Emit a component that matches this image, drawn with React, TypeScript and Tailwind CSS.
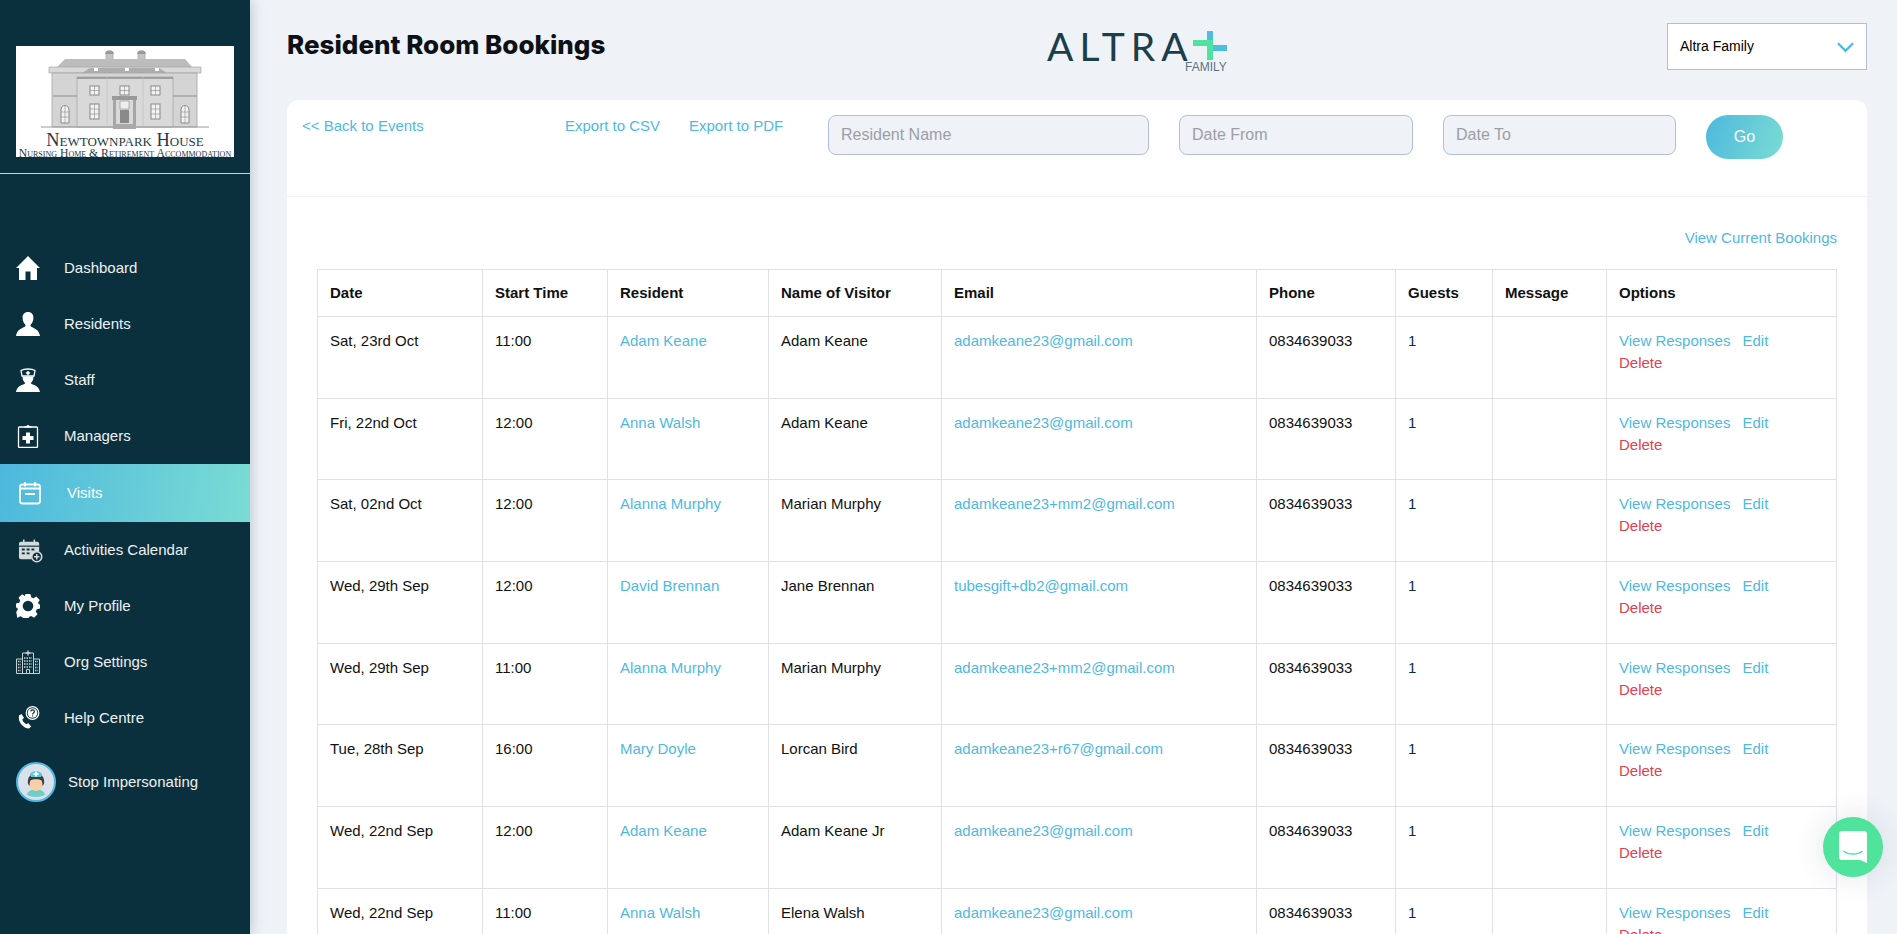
import type { ReactNode } from "react";

const cls = { link: "text-[#4fb9df]" };

function HomeIcon() {
  return (
    <svg viewBox="0 0 24 24" className="h-6 w-6" fill="#fff">
      <path d="M12 0 L24 12 L21 12 L21 24 L14.5 24 L14.5 15.5 L9.5 15.5 L9.5 24 L3 24 L3 12 L0 12 Z" />
    </svg>
  );
}

function UserIcon() {
  return (
    <svg viewBox="0 0 24 24" className="h-6 w-6" fill="#fff">
      <path d="M12 0c3.6 0 5.6 2.400 5.400 6-.1 2.600-1 5-2.600 6.600-.5.6-.4 1.700.4 2.200 3 1.600 7.700 2.600 8.800 9.200H0c1.100-6.600 5.800-7.600 8.800-9.200.8-.5.9-1.600.4-2.200C7.600 11 6.700 8.600 6.600 6 6.400 2.400 8.400 0 12 0z" />
    </svg>
  );
}

function StaffIcon() {
  return (
    <svg viewBox="0 0 24 24" className="h-6 w-6" fill="#fff">
      <path d="M5 2.500C8 .5 16 .5 19 2.500L18 8H6z" fill="none" stroke="#fff" strokeWidth="1.300" />
      <path d="M11.200 3h1.600v1.300h1.300v1.400h-1.300V7h-1.600V5.700H9.900V4.300h1.300z" />
      <path d="M6.500 8.500h11c0 2.800-1 5-2.200 6-.6.5-.4 1.200.4 1.600 2.800 1.200 7.300 2.400 8.300 7.900H0c1-5.500 5.500-6.700 8.300-7.900.8-.4 1-1.100.4-1.600-1.200-1-2.200-3.200-2.200-6z" />
    </svg>
  );
}

function ClipboardIcon() {
  return (
    <svg viewBox="0 0 24 24" className="h-6 w-6">
      <rect x="2.500" y="3" width="19" height="20.500" rx="1" fill="none" stroke="#fff" strokeWidth="1.300" />
      <path d="M8 3.500c0-1.500 1.500-1.500 2.500-1.500.5-1.500 2.500-1.500 3 0 1 0 2.500 0 2.500 1.500z" fill="#fff" />
      <path d="M10 8.500h4v3.500h3.500v4H14v3.500h-4V16H6.500v-4H10z" fill="#fff" />
    </svg>
  );
}

function VisitsIcon() {
  return (
    <svg viewBox="0 0 24 24" className="h-6 w-6" fill="none" stroke="#fff">
      <rect x="2" y="3.500" width="20" height="19" rx="2.500" strokeWidth="1.800" />
      <path d="M7 1v4.500M17 1v4.500M2 7.500h20" strokeWidth="1.800" />
      <path d="M7 13h10" strokeWidth="2" />
    </svg>
  );
}

function CalendarPlusIcon() {
  return (
    <svg viewBox="0 0 26 26" className="ml-[2px] h-[25px] w-[25px]" fill="none">
      <path d="M3 4h17a2 2 0 0 1 2 2v8.500A7 7 0 0 0 14 22H3a2 2 0 0 1-2-2V6a2 2 0 0 1 2-2z" fill="#d5dadc" />
      <path d="M6 1.500v4.500M17 1.500v4.500" stroke="#d5dadc" strokeWidth="1.600" />
      <path d="M1 8.500h21" stroke="#0b303d" strokeWidth="1.200" />
      <path d="M4 11h3v2H4zM9 11h3v2H9zM14 11h3v2h-3zM4 15h3v2H4zM9 15h3v2H9z" fill="#0b303d" />
      <circle cx="19.500" cy="19.500" r="5.200" stroke="#d5dadc" strokeWidth="1.600" />
      <path d="M19.500 16.700v5.600M16.700 19.500h5.600" stroke="#d5dadc" strokeWidth="1.600" />
    </svg>
  );
}

function GearIcon() {
  return (
    <svg viewBox="0 0 24 24" className="h-6 w-6" fill="#fff">
      <path
        fillRule="evenodd"
        d="M9.500 0h5l.7 3.200 2.300 1 2.800-1.700 3.500 3.500-1.700 2.800 1 2.300L24 9.500v5l-3.200.7-1 2.300 1.700 2.800-3.500 3.500-2.800-1.700-2.300 1-.7 3.400h-5l-.7-3.200-2.300-1-2.800 1.700L.2 18l1.700-2.800-1-2.300L0 14.500v-5l3.200-.7 1-2.300-1.700-2.800L6 .2l2.800 1.700 .7-1.900zM12 6.700a5.300 5.300 0 1 0 0 10.600 5.300 5.300 0 0 0 0-10.600z"
      />
    </svg>
  );
}

function HospitalIcon() {
  return (
    <svg viewBox="0 0 24 24" className="h-6 w-6" fill="none" stroke="#c8d0d3" strokeWidth="1">
      <path d="M.5 23.500V9h6M23.500 23.500V9h-6M6.500 23.500V3h11v20.500M.5 23.500h23" />
      <path d="M10.500 23.500v-4h3v4" />
      <path d="M12 .5v5M9.500 3h5" strokeWidth="1.400" />
      <path d="M2 11.500h3M2 14.500h3M2 17.500h3M2 20.500h3M19 11.500h3M19 14.500h3M19 17.500h3M19 20.500h3" strokeWidth="1.600" strokeDasharray="1 .6" />
      <path d="M8 8h8M8 11h8M8 14h8M8 17h8" strokeWidth="1.600" strokeDasharray="1.500 1" />
    </svg>
  );
}

function HelpIcon() {
  return (
    <svg viewBox="0 0 24 24" className="h-6 w-6" fill="none">
      <path d="M3 9.500 5.500 8l2.500 4-1.700 1.500c.6 2 2 3.500 4.200 4.700l1.700-1.300 3 3.600-2.200 2c-5.500 0-11.500-6.500-10-13z" fill="#fff" />
      <circle cx="16.500" cy="7" r="6.300" stroke="#fff" strokeWidth="1.200" />
      <circle cx="16.500" cy="7" r="4.800" fill="#fff" />
      <path d="M14.800 5.600c0-2.200 3.600-2.200 3.600 0 0 1.400-1.800 1.400-1.800 2.800M16.600 9.400v1" stroke="#0b303d" strokeWidth="1.200" />
    </svg>
  );
}

function NurseAvatar() {
  return (
    <svg viewBox="0 0 40 40" className="h-10 w-10">
      <circle cx="20" cy="20" r="19" fill="#dbe1ea" stroke="#4db8e4" strokeWidth="2" />
      <path d="M11 33c.5-4 4-5.500 9-5.500s8.500 1.500 9 5.500c-5 2.600-13 2.600-18 0z" fill="#6cd0c9" />
      <path d="M12 22c-1-7 3-11 8-11s9 4 8 11l-2 2H14z" fill="#3a3a44" />
      <ellipse cx="20" cy="22" rx="6.500" ry="7" fill="#f6cfa8" />
      <path d="M13.500 19c2-2.500 11-2.500 13 0l-1-5h-11z" fill="#3a3a44" />
      <path d="M14 13c0-5 12-5 12 0l-1 2H15z" fill="#58c9d8" />
      <path d="M19 9.500h2v1.500h1.500v2H21v1.500h-2V13h-1.500v-2H19z" fill="#fff" />
    </svg>
  );
}

function HouseLogo() {
  const win = "#8a8a8a";
  return (
    <div className="flex h-[111px] w-[218px] flex-col items-center bg-white">
      <svg viewBox="0 0 218 85" className="h-[85px] w-[218px] shrink-0">
        {/* chimneys */}
        <path d="M90 7h7v13h-7zM122 7h7v13h-7z" fill="#c4c4c4" stroke="#999" strokeWidth="0.600" />
        <path d="M89 8c0-5 9-5 9 0zM121 8c0-5 9-5 9 0z" fill="#9a9a9a" />
        {/* roof and cornice */}
        <path d="M41 21 L49 13 H169 L176 21 Z" fill="#bcbcbc" />
        <path d="M33 21h152v6H33z" fill="#d8d8d8" stroke="#a8a8a8" strokeWidth="0.700" />
        <path d="M66 27 L74 22 H143 L151 27 Z" fill="#adadad" />
        <path d="M78 22h4v3h-4zM109 22h4v3h-4zM139 22h4v3h-4z" fill="#fff" />
        {/* walls */}
        <path d="M36 27h145v54H36z" fill="#d4d4d4" stroke="#a3a3a3" strokeWidth="0.800" />
        <path d="M61 31h96v50H61z" fill="#d9d9d9" stroke="#a3a3a3" strokeWidth="0.700" />
        <path d="M61 32h96" stroke="#8e8e8e" strokeWidth="1.400" />
        <path d="M37 50h24M157 50h24" stroke="#8e8e8e" strokeWidth="1.200" />
        <path d="M91 31v50M127 31v50" stroke="#b9c3c9" strokeWidth="0.600" />
        {/* windows */}
        {[74, 104, 135].map((x) => (
          <g key={x}>
            <rect x={x} y="40" width="9" height="9" fill="#f2f2f2" stroke={win} strokeWidth="1" />
            <path d={`M${x + 4.5} 40v9M${x} 44.500h9`} stroke={win} strokeWidth="0.600" />
          </g>
        ))}
        {[74, 135].map((x) => (
          <g key={x}>
            <rect x={x} y="58" width="9" height="15" fill="#f2f2f2" stroke={win} strokeWidth="1" />
            <path d={`M${x + 4.5} 58v15M${x} 63h9M${x} 68h9`} stroke={win} strokeWidth="0.600" />
          </g>
        ))}
        {[45, 165].map((x) => (
          <g key={x}>
            <path d={`M${x} 77v-13c0-6 8-6 8 0v13z`} fill="#f2f2f2" stroke={win} strokeWidth="1" />
            <path d={`M${x + 4} 60v17M${x} 66h8M${x} 71h8`} stroke={win} strokeWidth="0.600" />
          </g>
        ))}
        {/* portico */}
        <path d="M96 50h25v4H96z" fill="#999" />
        <path d="M97 54h3v24h-3zM117 54h3v24h-3z" fill="#a5a5a5" />
        <path d="M104 55h9v8h-9z" fill="#eee" stroke={win} strokeWidth="0.600" />
        <path d="M104 64h9v13h-9z" fill="#8a8a8a" />
        <path d="M25 81h168" stroke="#9a9a9a" strokeWidth="1" />
        <path d="M97 78h23v5H97z" fill="#a9a9a9" />
      </svg>
      <div className="mt-[1px] text-[18.4px] leading-[16px] text-[#1f3a48] [font-family:'Liberation_Serif',serif] [font-variant:small-caps] whitespace-nowrap">
        Newtownpark House
      </div>
      <div className="mt-[1px] text-[11.7px] leading-[9px] text-[#1f3a48] [font-family:'Liberation_Serif',serif] [font-variant:small-caps] whitespace-nowrap">
        Nursing Home &amp; Retirement Accommodation
      </div>
    </div>
  );
}

function AltraLogo() {
  return (
    <div className="relative mt-[30px] h-[46px] w-[180px] shrink-0">
      <div className="text-[39px] font-normal leading-[32px] tracking-[6px] text-[#1c3e4b] [font-family:Lato,sans-serif]">
        ALTRA
      </div>
      <svg viewBox="0 0 34 29" className="absolute left-[146px] top-[1px] h-[29px] w-[34px]">
        <path d="M14 0h6v18h-6zM20 14h14v6H20z" fill="#4fbde0" />
        <path d="M0 9h20v6H0zM14 15h6v14h-6z" fill="#50e39d" />
      </svg>
      <div className="absolute left-[138px] top-[32px] text-[12px] leading-[10px] text-[#5b7484]">FAMILY</div>
    </div>
  );
}

type NavItem = { label: string; icon: ReactNode };

const navTop: NavItem[] = [
  { label: "Dashboard", icon: <HomeIcon /> },
  { label: "Residents", icon: <UserIcon /> },
  { label: "Staff", icon: <StaffIcon /> },
  { label: "Managers", icon: <ClipboardIcon /> },
];

const navBottom: NavItem[] = [
  { label: "Activities Calendar", icon: <CalendarPlusIcon /> },
  { label: "My Profile", icon: <GearIcon /> },
  { label: "Org Settings", icon: <HospitalIcon /> },
  { label: "Help Centre", icon: <HelpIcon /> },
];

function NavRow({ item }: { item: NavItem }) {
  return (
    <a className="flex h-14 items-center pl-4 text-[15px] text-[#eef1f3]">
      <span className="flex w-12 shrink-0">{item.icon}</span>
      {item.label}
    </a>
  );
}

function Sidebar() {
  return (
    <aside className="flex w-[250px] shrink-0 flex-col bg-[#0b303d] shadow-[2px_0_12px_rgba(60,70,110,0.25)]">
      <div className="flex h-[174px] shrink-0 items-start border-b border-[#cfd6d9] pl-4 pt-[46px]">
        <HouseLogo />
      </div>
      <nav className="pt-[66px]">
        {navTop.map((item) => (
          <NavRow key={item.label} item={item} />
        ))}
        <a className="flex h-[58px] items-center bg-[linear-gradient(100deg,#4db8de,#7bdcd3)] pl-[18px] text-[15px] text-white">
          <span className="flex w-[49px] shrink-0"><VisitsIcon /></span>
          Visits
        </a>
        {navBottom.map((item) => (
          <NavRow key={item.label} item={item} />
        ))}
        <a className="mt-[16px] flex items-center pl-4 text-[15px] text-[#eef1f3]">
          <span className="flex w-[52px] shrink-0"><NurseAvatar /></span>
          Stop Impersonating
        </a>
      </nav>
    </aside>
  );
}

type Booking = {
  date: string;
  time: string;
  resident: string;
  visitor: string;
  email: string;
};

const bookings: Booking[] = [
  { date: "Sat, 23rd Oct", time: "11:00", resident: "Adam Keane", visitor: "Adam Keane", email: "adamkeane23@gmail.com" },
  { date: "Fri, 22nd Oct", time: "12:00", resident: "Anna Walsh", visitor: "Adam Keane", email: "adamkeane23@gmail.com" },
  { date: "Sat, 02nd Oct", time: "12:00", resident: "Alanna Murphy", visitor: "Marian Murphy", email: "adamkeane23+mm2@gmail.com" },
  { date: "Wed, 29th Sep", time: "12:00", resident: "David Brennan", visitor: "Jane Brennan", email: "tubesgift+db2@gmail.com" },
  { date: "Wed, 29th Sep", time: "11:00", resident: "Alanna Murphy", visitor: "Marian Murphy", email: "adamkeane23+mm2@gmail.com" },
  { date: "Tue, 28th Sep", time: "16:00", resident: "Mary Doyle", visitor: "Lorcan Bird", email: "adamkeane23+r67@gmail.com" },
  { date: "Wed, 22nd Sep", time: "12:00", resident: "Adam Keane", visitor: "Adam Keane Jr", email: "adamkeane23@gmail.com" },
  { date: "Wed, 22nd Sep", time: "11:00", resident: "Anna Walsh", visitor: "Elena Walsh", email: "adamkeane23@gmail.com" },
];

const headers = ["Date", "Start Time", "Resident", "Name of Visitor", "Email", "Phone", "Guests", "Message", "Options"];
const colWidths = [165, 125, 161, 173, 315, 139, 97, 114, 230];

function BookingsTable() {
  const td = "h-[81.7px] border border-[#dfe1e8] pl-3 pr-2 pt-[13px] align-top leading-[22px]";
  return (
    <table className="w-[1519px] table-fixed border-collapse text-[15px] text-[#111]">
      <colgroup>
        {colWidths.map((w, i) => (
          <col key={i} style={{ width: w }} />
        ))}
      </colgroup>
      <thead>
        <tr>
          {headers.map((h) => (
            <th key={h} className="h-[47px] border border-[#dfe1e8] pl-3 text-left font-bold">
              {h}
            </th>
          ))}
        </tr>
      </thead>
      <tbody>
        {bookings.map((b, i) => (
          <tr key={i}>
            <td className={td}>{b.date}</td>
            <td className={td}>{b.time}</td>
            <td className={td}><a className={cls.link}>{b.resident}</a></td>
            <td className={td}>{b.visitor}</td>
            <td className={td}><a className={cls.link}>{b.email}</a></td>
            <td className={td}>0834639033</td>
            <td className={`${td} text-[#0b303d]`}>1</td>
            <td className={td}></td>
            <td className={td}>
              <a className={`${cls.link} mr-3`}>View Responses</a>
              <a className={cls.link}>Edit</a>
              <br />
              <a className="text-[#e2404f]">Delete</a>
            </td>
          </tr>
        ))}
      </tbody>
    </table>
  );
}

function FilterInput({ placeholder, className }: { placeholder: string; className: string }) {
  return (
    <input
      placeholder={placeholder}
      className={`h-10 rounded-lg border border-[#aebfd6] bg-[#eff2f7] px-3 text-[16px] placeholder:text-[#9b9fa5] ${className}`}
    />
  );
}

export default function App() {
  return (
    <div className="relative flex h-screen overflow-hidden bg-[#eff3f8] [font-family:'Liberation_Sans',Arial,sans-serif]">
      <Sidebar />
      <main className="min-w-0 flex-1 pl-[37px] pr-[30px]">
        <header className="flex h-[100px] items-start">
          <h1 className="mt-[28px] w-[760px] shrink-0 text-[26px] font-extrabold leading-[34px] text-[#0d1116] [font-family:Inter,sans-serif]">
            Resident Room Bookings
          </h1>
          <AltraLogo />
          <div className="relative ml-auto mt-[23px] flex h-[47px] w-[200px] items-center border border-[#aebfd6] bg-white pl-3 text-[14px] text-black">
            Altra Family
            <svg viewBox="0 0 18 11" className="absolute right-[12px] top-[18px] h-[11px] w-[17px]" fill="none" stroke="#4db8de" strokeWidth="2.400">
              <path d="M1 1l8 8 8-8" />
            </svg>
          </div>
        </header>
        <section className="rounded-t-xl bg-white">
          <div className="flex h-[97px] items-start border-b border-[#f0f2f6] pl-[15px] pt-[15px] text-[15px] leading-[22px]">
            <a className={`${cls.link} w-[263px] shrink-0`}>&lt;&lt; Back to Events</a>
            <a className={`${cls.link} w-[124px] shrink-0`}>Export to CSV</a>
            <a className={`${cls.link} w-[139px] shrink-0`}>Export to PDF</a>
            <FilterInput placeholder="Resident Name" className="w-[321px]" />
            <FilterInput placeholder="Date From" className="ml-[30px] w-[234px]" />
            <FilterInput placeholder="Date To" className="ml-[30px] w-[233px]" />
            <button className="ml-[30px] h-11 w-[77px] rounded-full bg-[linear-gradient(110deg,#4db8de,#7bdcd3)] text-[16px] text-white">
              Go
            </button>
          </div>
          <div className="px-[30px] pb-10 pt-[30px]">
            <div className={`mb-5 text-right text-[15px] leading-[22px] ${cls.link}`}>View Current Bookings</div>
            <BookingsTable />
          </div>
        </section>
      </main>
      <button className="absolute left-[1823px] top-[817px] flex h-[60px] w-[60px] items-center justify-center rounded-full bg-[#4fe39c] shadow-[0_0_30px_rgba(60,70,110,0.15)]">
        <svg viewBox="0 0 28 32" className="h-8 w-7">
          <path d="M3 0h22a3 3 0 0 1 3 3v29l-7-3H3a3 3 0 0 1-3-3V3a3 3 0 0 1 3-3z" fill="#fff" />
          <path d="M4.500 20c5 4 14 4 19 0" fill="none" stroke="#4fe39c" strokeWidth="1.500" />
        </svg>
      </button>
    </div>
  );
}
